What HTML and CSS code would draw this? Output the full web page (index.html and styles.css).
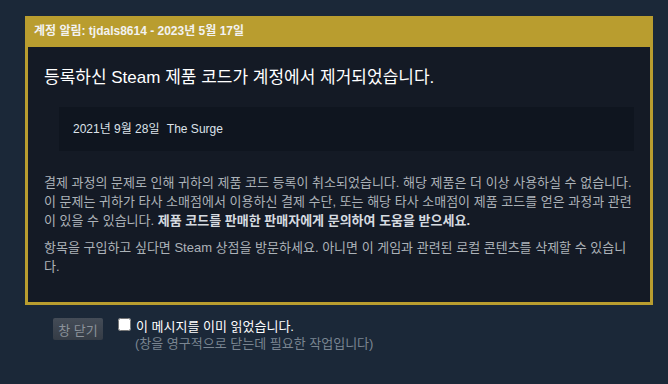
FILE: index.html
```html
<!DOCTYPE html>
<html lang="ko">
<head>
<meta charset="UTF-8">
<title>계정 알림</title>
<link rel="stylesheet" href="styles.css">
</head>
<body>

<div class="notice">
    <div class="notice-header">계정 알림: tjdals8614 - 2023년 5월 17일</div>
    <div class="notice-body">
        <h2 class="notice-title">등록하신 Steam 제품 코드가 계정에서 제거되었습니다.</h2>
        <div class="code-box">
            <span class="code-date">2021년 9월 28일</span>
            <span class="code-name">The Surge</span>
        </div>
        <p class="notice-text">결제 과정의 문제로 인해 귀하의 제품 코드 등록이 취소되었습니다. 해당 제품은 더 이상 사용하실 수 없습니다. 이 문제는 귀하가 타사 소매점에서 이용하신 결제 수단, 또는 해당 타사 소매점이 제품 코드를 얻은 과정과 관련이 있을 수 있습니다. <b>제품 코드를 판매한 판매자에게 문의하여 도움을 받으세요.</b></p>
        <p class="notice-text">항목을 구입하고 싶다면 Steam 상점을 방문하세요. 아니면 이 게임과 관련된 로컬 콘텐츠를 삭제할 수 있습니다.</p>
    </div>
</div>

<div class="footer">
    <button class="close-btn" type="button">창 닫기</button>
    <label class="read-check">
        <input type="checkbox" id="dismiss">
        <span class="read-text">
            <span class="read-main">이 메시지를 이미 읽었습니다.</span>
            <span class="read-sub">(창을 영구적으로 닫는데 필요한 작업입니다)</span>
        </span>
    </label>
</div>

</body>
</html>
```

FILE: styles.css
```css
body {
    background-color: #1b2838;
    color: #acb2b8;
    font-family: "Liberation Sans", Arial, "Noto Sans CJK KR", sans-serif;
    margin: 0;
    padding: 16px 15px 0 25px;
}
.notice {
    width: 622px;
    background-color: #b99d2f;
    padding: 0 3px 3px 3px;
}
.notice-header {
    height: 31px;
    line-height: 31px;
    padding-left: 6px;
    color: #f2f2f2;
    font-size: 12px;
    font-weight: bold;
}
.notice-body {
    background-color: #141a25;
    padding: 20px 16px 26px 16px;
}
.notice-title {
    margin: 0;
    font-size: 17px;
    line-height: 22px;
    font-weight: normal;
    color: #ffffff;
}
.code-box {
    margin: 18px 0 22px 15px;
    padding: 14px;
    line-height: 16px;
    background-color: #0f151f;
    color: #dde3ea;
    font-size: 12px;
}
.code-name {
    margin-left: 4px;
}
.notice-text {
    margin: 0;
    font-size: 13px;
    line-height: 19px;
}
.notice-text + .notice-text {
    margin-top: 8px;
}
.notice-text b {
    color: #d6dbe0;
}
.footer {
    display: flex;
    align-items: flex-start;
    padding: 13px 0 0 28px;
}
.close-btn {
    width: 50px;
    height: 22px;
    padding: 0;
    border: none;
    border-radius: 2px;
    background: linear-gradient(to bottom, #444c57, #353c46);
    color: #8b929a;
    font-family: inherit;
    font-size: 13px;
    cursor: pointer;
}
.read-check {
    display: flex;
    align-items: flex-start;
    margin-left: 15px;
    cursor: pointer;
}
.read-check input {
    width: 13px;
    height: 13px;
    margin: 0 5px 0 0;
}
.read-text {
    display: flex;
    flex-direction: column;
    font-size: 13px;
    font-weight: normal;
    line-height: 17px;
    margin-top: 0;
}
.read-main {
    color: #ffffff;
}
.read-sub {
    color: #7a8591;
    margin-left: -1px;
}
```
